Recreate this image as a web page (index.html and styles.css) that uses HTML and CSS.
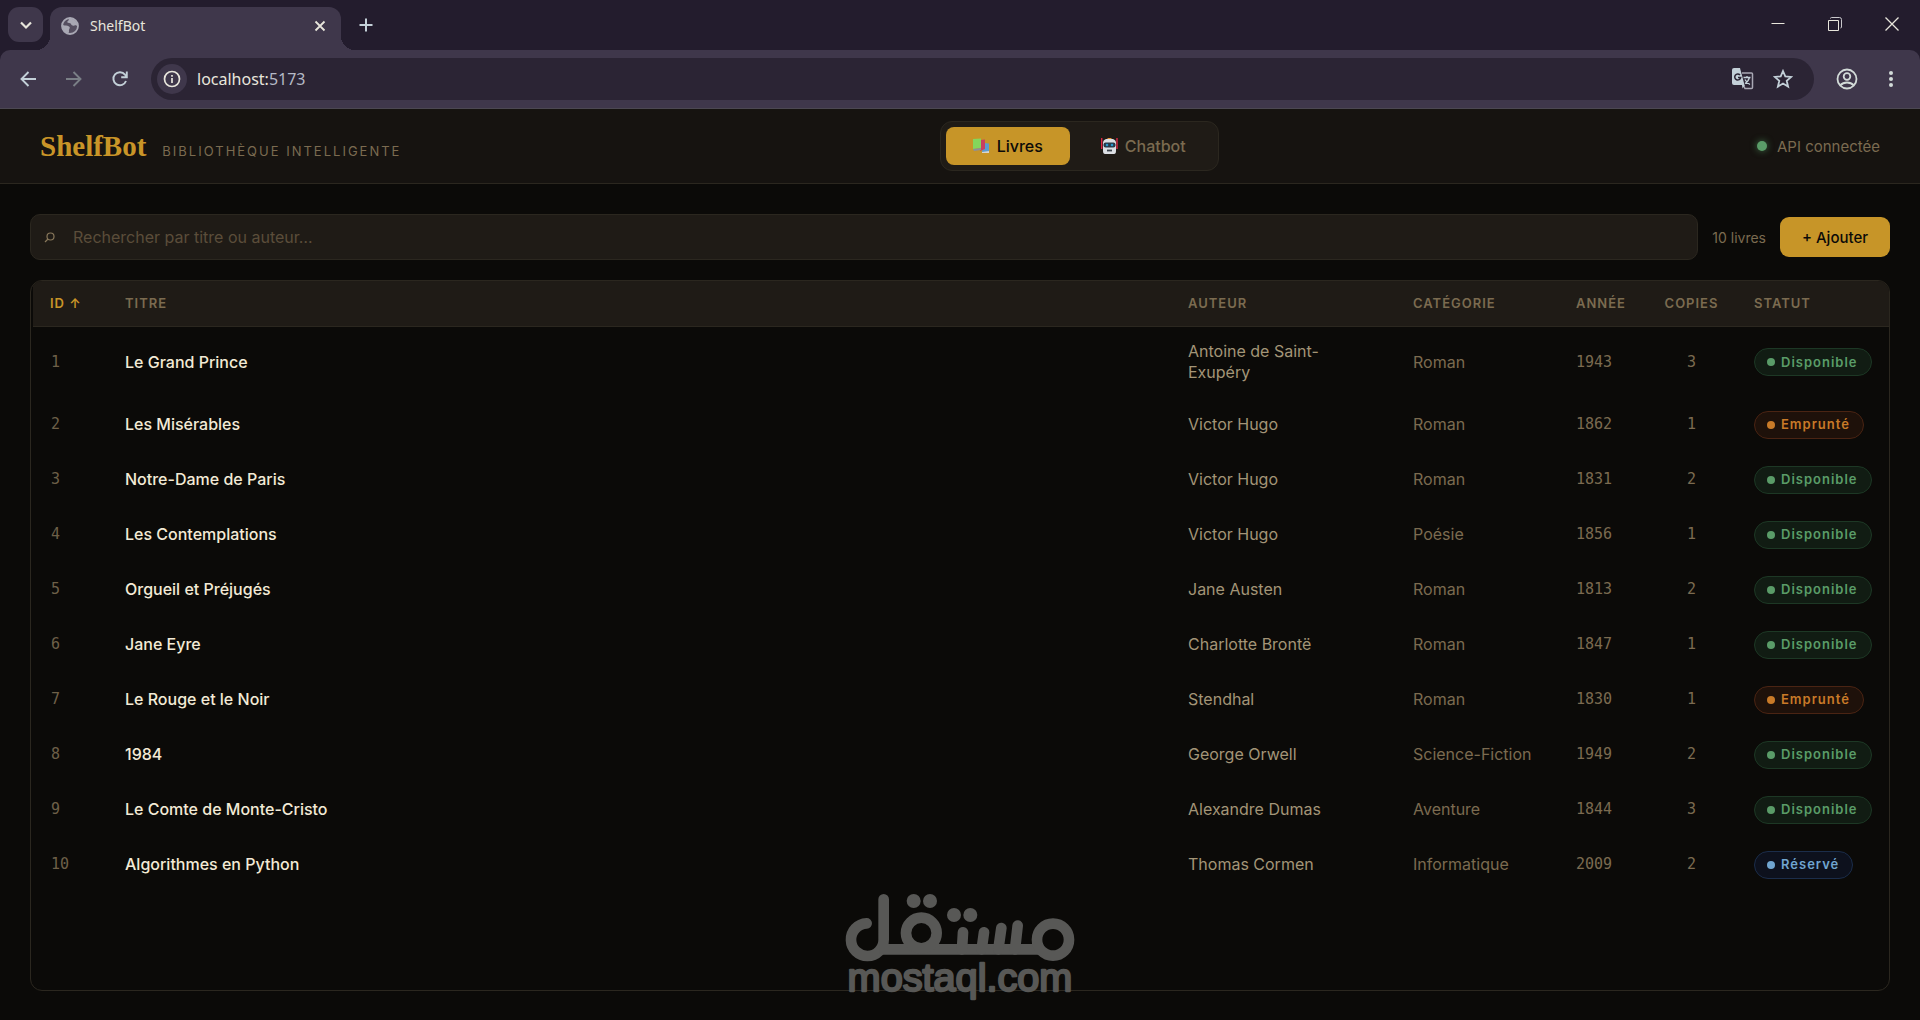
FILE: index.html
```html
<!DOCTYPE html>
<html lang="fr">
<head>
<meta charset="utf-8">
<title>ShelfBot</title>
<link rel="stylesheet" href="styles.css">
</head>
<body>
<div class="browser">
  <div class="tabstrip">
    <button class="tab-search" aria-label="Rechercher des onglets"><svg width="14" height="14" viewBox="0 0 14 14"><path d="M2 4.500l5 5 5-5" fill="none" stroke="#e8e6dc" stroke-width="2.200"/></svg></button>
    <div class="tab">
      <svg width="18" height="18" viewBox="0 0 18 18"><circle cx="9" cy="9" r="8" fill="#554e60" stroke="#a9a8b4" stroke-width="1.800"/><path d="M2 8c2 1 4 0 6 1.500 2 1.500-.5 2.500 0 4.500.3 1.500-1 2.500-1.500 2.500C3 15.500 1 12 2 8z M8 1.500c0 2.500-1.500 2.500-2 3.500 1 1.500 3.500.5 4 2 .5 1.500 2 2 3.500 1.500 1.500-.5 2.500.5 3 1C17 5 13 1 8 1.500z" fill="#a9a8b4"/></svg>
      <span class="tab-title">ShelfBot</span>
      <button class="tab-close" aria-label="Fermer l'onglet"><svg width="12" height="12" viewBox="0 0 12 12"><path d="M1.500 1.500l9 9M10.500 1.500l-9 9" stroke="#e8e6dc" stroke-width="1.800"/></svg></button>
    </div>
    <button class="tab-new" aria-label="Nouvel onglet"><svg width="14" height="14" viewBox="0 0 14 14"><path d="M7 .5v13M.5 7h13" stroke="#c3d0d8" stroke-width="2"/></svg></button>
    <div class="window-controls">
      <button aria-label="Réduire"><svg width="14" height="14" viewBox="0 0 14 14"><path d="M.5 6.500h13" stroke="#e8e6dc"/></svg></button>
      <button aria-label="Restaurer"><svg width="14" height="14" viewBox="0 0 14 14"><path d="M.5 3.500h10v10h-10z" fill="none" stroke="#e8e6dc"/><path d="M2.500 1.500a1 1 0 0 1 1-1h8a2 2 0 0 1 2 2V10a1 1 0 0 1-1 1" fill="none" stroke="#c9c8cc"/></svg></button>
      <button aria-label="Fermer"><svg width="14" height="14" viewBox="0 0 14 14"><path d="M.5 .5l13 13M13.500 .5l-13 13" stroke="#e8e6dc" stroke-width="1.300"/></svg></button>
    </div>
  </div>
  <div class="toolbar">
    <button class="tool" aria-label="Précédent"><svg width="16" height="16" viewBox="0 0 16 16"><path d="M16 8H2M8.500 1L1.500 8l7 7" fill="none" stroke="#c3d0d8" stroke-width="1.900"/></svg></button>
    <button class="tool" aria-label="Suivant"><svg width="16" height="16" viewBox="0 0 16 16"><path d="M0 8h14M7.500 1l7 7-7 7" fill="none" stroke="#7a7f86" stroke-width="1.900"/></svg></button>
    <button class="tool" aria-label="Actualiser"><svg width="16" height="16" viewBox="0 0 16 16"><path d="M14 10a6.500 6.500 0 1 1-1-6.300L14.500 5.500M14.800 .5v5.700H9.200" fill="none" stroke="#c3d0d8" stroke-width="1.900"/></svg></button>
    <div class="address">
      <button class="site-info" aria-label="Informations du site"><svg width="18" height="18" viewBox="0 0 18 18"><circle cx="9" cy="9" r="7.500" fill="none" stroke="#e8e6dc" stroke-width="1.700"/><path d="M9 8v5M9 5v1.700" stroke="#e8e6dc" stroke-width="1.700"/></svg></button>
      <span class="url"><span class="host">localhost:</span>5173</span>
      <button class="tool-small" aria-label="Traduire"><svg width="22" height="22" viewBox="0 0 22 22"><path d="M10 5h9.500a1 1 0 0 1 1 1v13.500a1 1 0 0 1-1 1H13l-2-4" fill="none" stroke="#a9a8b4" stroke-width="1.500"/><path d="M2 0h6l4.500 17H2a2 2 0 0 1-2-2V2a2 2 0 0 1 2-2z" fill="#c3d0d8"/><path d="M10 17h3l-2.500 3.500z" fill="#c3d0d8"/><path d="M8 7a3 3 0 1 0 .7 2.500H6" fill="none" stroke="#2b2434" stroke-width="1.500"/><path d="M11.500 9.500h7M15 8v1.500M17.500 9.500c-1 3-2.500 5-4.500 6M13 11.500c1 2 3 4 5 5" fill="none" stroke="#c3d0d8" stroke-width="1.300"/></svg></button>
      <button class="tool-small" aria-label="Ajouter aux favoris"><svg width="20" height="20" viewBox="0 0 20 20"><path d="M10 2l2.300 5.400 5.900.5-4.500 3.900 1.400 5.800L10 14.500l-5.100 3.100 1.400-5.800L1.800 7.900l5.900-.5z" fill="none" stroke="#c3d0d8" stroke-width="1.800"/></svg></button>
    </div>
    <button class="profile" aria-label="Profil"><svg width="22" height="22" viewBox="0 0 22 22"><g fill="none" stroke="#d2dbd8" stroke-width="1.800"><circle cx="11" cy="11" r="9.500"/><circle cx="11" cy="8.500" r="3.300"/><path d="M4 17.500c4-4 10-4 14 0"/></g></svg></button>
    <button class="menu" aria-label="Menu"><svg width="6" height="18" viewBox="0 0 6 18"><g fill="#d2dbd8"><circle cx="3" cy="3" r="2"/><circle cx="3" cy="9" r="2"/><circle cx="3" cy="15" r="2"/></g></svg></button>
  </div>
</div>

<header class="header">
  <div class="brand">
    <h1 class="logo">ShelfBot</h1>
    <span class="tagline">BIBLIOTHÈQUE INTELLIGENTE</span>
  </div>
  <nav class="nav">
    <button class="nav-item active"><svg width="17" height="16" viewBox="0 0 17 16"><path d="M10 5l6 .5V14l-7 .5z" fill="#5b9bd0"/><path d="M9 14l7-1v2H9z" fill="#d8d4d0"/><path d="M7 2l5-.5V11l-5 2z" fill="#c83f60"/><path d="M0 1l8-.5v9.500L0 11z" fill="#84d65c"/><path d="M0 11l8-1v2l-7 1z" fill="#8d8f98"/></svg>Livres</button>
    <button class="nav-item"><svg width="17" height="16" viewBox="0 0 17 16"><path d="M.7 0v11M16 0v11" stroke="#dc2544" stroke-width="1.400"/><path d="M5 2l2-2h3l2 2z" fill="#e09232"/><path d="M5 1h7q3 1 3 4v8q0 3-2 3H4q-2 0-2-3V5q0-3 3-4z" fill="#dcdfe4"/><rect x="2.500" y="4.500" width="12" height="5" rx="2" fill="#273848"/><circle cx="6" cy="7" r="1.300" fill="#2b95cb"/><circle cx="11" cy="7" r="1.300" fill="#2b95cb"/><path d="M6 12.500h5" stroke="#39414a" stroke-width="1.800"/></svg>Chatbot</button>
  </nav>
  <div class="api"><span class="api-dot"></span>API connectée</div>
</header>

<main class="main">
  <div class="controls">
    <label class="search">
      <svg width="12" height="12" viewBox="0 0 12 12"><circle cx="6.500" cy="5.500" r="3.500" fill="none" stroke="#89785b" stroke-width="1.200"/><path d="M4 8L1 11" stroke="#89785b" stroke-width="1.300"/></svg>
      <input type="text" placeholder="Rechercher par titre ou auteur…" aria-label="Rechercher">
    </label>
    <span class="count">10 livres</span>
    <button class="add">+ Ajouter</button>
  </div>
  <div class="table-wrap">
    <table class="books">
      <colgroup><col class="col-id"><col><col class="col-author"><col class="col-cat"><col class="col-year"><col class="col-copies"><col class="col-status"></colgroup>
      <thead><tr><th class="sorted">ID ↑</th><th>TITRE</th><th>AUTEUR</th><th>CATÉGORIE</th><th>ANNÉE</th><th class="center">COPIES</th><th>STATUT</th></tr></thead>
      <tbody>
        <tr><td class="id">1</td><td class="title">Le Grand Prince</td><td class="author">Antoine de Saint-Exupéry</td><td>Roman</td><td class="num">1943</td><td class="num center">3</td><td class="status"><span class="pill available">Disponible</span></td></tr>
        <tr><td class="id">2</td><td class="title">Les Misérables</td><td class="author">Victor Hugo</td><td>Roman</td><td class="num">1862</td><td class="num center">1</td><td class="status"><span class="pill borrowed">Emprunté</span></td></tr>
        <tr><td class="id">3</td><td class="title">Notre-Dame de Paris</td><td class="author">Victor Hugo</td><td>Roman</td><td class="num">1831</td><td class="num center">2</td><td class="status"><span class="pill available">Disponible</span></td></tr>
        <tr><td class="id">4</td><td class="title">Les Contemplations</td><td class="author">Victor Hugo</td><td>Poésie</td><td class="num">1856</td><td class="num center">1</td><td class="status"><span class="pill available">Disponible</span></td></tr>
        <tr><td class="id">5</td><td class="title">Orgueil et Préjugés</td><td class="author">Jane Austen</td><td>Roman</td><td class="num">1813</td><td class="num center">2</td><td class="status"><span class="pill available">Disponible</span></td></tr>
        <tr><td class="id">6</td><td class="title">Jane Eyre</td><td class="author">Charlotte Brontë</td><td>Roman</td><td class="num">1847</td><td class="num center">1</td><td class="status"><span class="pill available">Disponible</span></td></tr>
        <tr><td class="id">7</td><td class="title">Le Rouge et le Noir</td><td class="author">Stendhal</td><td>Roman</td><td class="num">1830</td><td class="num center">1</td><td class="status"><span class="pill borrowed">Emprunté</span></td></tr>
        <tr><td class="id">8</td><td class="title">1984</td><td class="author">George Orwell</td><td>Science-Fiction</td><td class="num">1949</td><td class="num center">2</td><td class="status"><span class="pill available">Disponible</span></td></tr>
        <tr><td class="id">9</td><td class="title">Le Comte de Monte-Cristo</td><td class="author">Alexandre Dumas</td><td>Aventure</td><td class="num">1844</td><td class="num center">3</td><td class="status"><span class="pill available">Disponible</span></td></tr>
        <tr><td class="id">10</td><td class="title">Algorithmes en Python</td><td class="author">Thomas Cormen</td><td>Informatique</td><td class="num">2009</td><td class="num center">2</td><td class="status"><span class="pill reserved">Réservé</span></td></tr>
      </tbody>
    </table>
  </div>
</main>

<svg class="watermark" width="280" height="150" viewBox="0 0 840 450" role="img" aria-label="مستقل">
  <g fill="none" stroke="#585856" stroke-width="32" stroke-linecap="round" stroke-linejoin="round">
    <path d="M140 160A49 49 0 1 0 191 209V88"/>
    <path d="M178 238H664" stroke-linecap="butt"/>
    <circle cx="304" cy="189" r="46"/>
    <path d="M426 238L429 187M485 238L492 187M535 238L544 174M585 238L593 167"/>
    <circle cx="699" cy="209" r="48"/>
  </g>
  <g fill="#585856"><circle cx="281" cy="93" r="21"/><circle cx="330" cy="93" r="21"/><circle cx="402" cy="135" r="21"/><circle cx="451" cy="135" r="21"/></g>
  <text class="watermark-text" x="420" y="364" text-anchor="middle">mostaql.com</text>
</svg>
</body>
</html>
```
FILE: styles.css
```css
* { box-sizing: border-box; }

body {
  margin: 0;
  min-height: 100vh;
  display: flex;
  flex-direction: column;
  position: relative;
  background: #0b0a08;
  color: #7b6b50;
  font-family: Inter, "Liberation Sans", sans-serif;
  font-size: 15px;
  line-height: 21px;
}

button {
  display: flex;
  align-items: center;
  justify-content: center;
  padding: 0;
  border: 0;
  background: none;
  color: inherit;
  font: inherit;
}

svg { display: block; flex: none; }

/* Browser window */
.browser {
  background: #231c2d;
  font-family: "Noto Sans", "Open Sans", sans-serif;
  border-bottom: 1px solid #4c4852;
}

.tabstrip { display: flex; height: 50px; padding-left: 8px; }

.tab-search {
  width: 35px;
  height: 35px;
  margin: 7px 7px 0 0;
  border-radius: 11px;
  background: #3f374b;
}

.tab {
  position: relative;
  display: flex;
  align-items: center;
  width: 291px;
  height: 43px;
  margin-top: 7px;
  padding: 0 14px 6px 11px;
  border-radius: 12px 12px 0 0;
  background: #3f374b;
}

.tab::before, .tab::after {
  content: "";
  position: absolute;
  bottom: 0;
  width: 14px;
  height: 14px;
}
.tab::before { right: 100%; background: radial-gradient(circle at 0 0, transparent 14px, #3f374b 14px); }
.tab::after { left: 100%; background: radial-gradient(circle at 100% 0, transparent 14px, #3f374b 14px); }

.tab-title { flex: 1; margin-left: 11px; color: #e8e6dc; font-size: 14px; }
.tab-close { width: 14px; height: 20px; }
.tab-new { width: 28px; height: 50px; margin-left: 11px; }
.window-controls { display: flex; height: 48px; margin-left: auto; }
.window-controls button { width: 57px; }

.toolbar {
  display: flex;
  align-items: center;
  gap: 16px;
  height: 58px;
  padding: 0 18px 0 13px;
  border-radius: 10px 10px 0 0;
  background: #3f374b;
}
.tool { width: 30px; height: 30px; }
.profile { width: 34px; height: 34px; }
.menu { width: 22px; height: 34px; }

.address {
  flex: 1;
  display: flex;
  align-items: center;
  height: 42px;
  padding: 0 20px 0 6px;
  border-radius: 21px;
  background: #2b2434;
}
.site-info { width: 30px; height: 30px; border-radius: 50%; background: #3f374b; }
.url { flex: 1; margin-left: 10px; color: #b5b9c6; font-size: 16px; }
.host { color: #e8e6dc; }
.tool-small { width: 22px; height: 30px; margin-left: 18px; }

/* Application header */
.header {
  display: flex;
  align-items: center;
  justify-content: space-between;
  height: 75px;
  padding: 0 40px;
  background: #161310;
  border-bottom: 1px solid #2b271f;
}
.brand { display: flex; align-items: baseline; gap: 16px; }
.logo {
  margin: 0;
  color: #c99528;
  font-family: "Liberation Serif", serif;
  font-size: 29px;
  line-height: 36px;
  font-weight: 700;
}
.tagline { font-size: 13px; letter-spacing: 2px; }

.nav {
  display: flex;
  gap: 4px;
  padding: 5px;
  border: 1px solid #2b271f;
  border-radius: 12px;
  background: #1f1b16;
}
.nav-item {
  gap: 7px;
  height: 38px;
  padding: 0 27px;
  border-radius: 8px;
  font-size: 16px;
  font-weight: 500;
}
.nav-item.active { background: #c79528; color: #0b0a08; }

.api { display: flex; align-items: center; gap: 10px; font-size: 15px; }
.api-dot {
  width: 10px;
  height: 10px;
  border-radius: 50%;
  background: #5a9c68;
  box-shadow: 0 0 7px #3f7049;
}

/* Book list */
.main {
  flex: 1;
  display: flex;
  flex-direction: column;
  gap: 20px;
  padding: 30px 30px 29px;
}
.controls { display: flex; align-items: center; gap: 14px; }
.search {
  flex: 1;
  display: flex;
  align-items: center;
  gap: 17px;
  height: 46px;
  padding: 0 13px;
  border: 1px solid #2b271f;
  border-radius: 10px;
  background: #1f1b16;
}
.search input {
  flex: 1;
  min-width: 0;
  padding: 0;
  border: 0;
  outline: 0;
  background: none;
  color: #f3ead6;
  font: inherit;
  font-size: 16px;
}
.search input::placeholder { color: #5b4d3a; opacity: 1; }
.count { font-size: 14px; }
.add {
  width: 110px;
  height: 40px;
  border-radius: 9px;
  background: #c79528;
  color: #0b0a08;
  font-size: 15px;
  font-weight: 500;
}

.table-wrap {
  flex: 1;
  padding-left: 2px;
  overflow: hidden;
  border: 1px solid #2b271f;
  border-radius: 12px;
}
.books { width: 100%; table-layout: fixed; border-collapse: separate; border-spacing: 0; }
.col-id { width: 75px; }
.col-author { width: 225px; }
.col-cat { width: 163px; }
.col-year { width: 87px; }
.col-copies { width: 91px; }
.col-status { width: 152px; }

.books th {
  height: 46px;
  padding: 0 0 0 17px;
  border-bottom: 1px solid #2b271f;
  background: #1f1b16;
  font-size: 13px;
  font-weight: 600;
  letter-spacing: 1px;
  text-align: left;
  white-space: nowrap;
}
.books th.sorted { color: #c99528; }
.books td { height: 55px; padding: 14px 17px; font-size: 16px; }
.books th.center, .books td.center { padding: 0; text-align: center; }
.books td.title { color: #f3ead6; font-weight: 500; }
.books td.author { padding-right: 40px; color: #a39577; }
.books td.id, .books td.num { font-family: "DejaVu Sans Mono", monospace; font-size: 15px; }
.books td.id { color: #6e6048; padding-left: 18px; }
.books td.status { padding: 13px 0 13px 17px; }

.pill {
  display: flex;
  align-items: center;
  gap: 6px;
  width: fit-content;
  height: 28px;
  padding: 0 13px 0 12px;
  border: 1px solid;
  border-radius: 14px;
  font-size: 13px;
  font-weight: 600;
  letter-spacing: 1px;
}
.pill::before { content: ""; width: 8px; height: 8px; border-radius: 50%; background: currentColor; }
.available { color: #5a9c68; background: #111c13; border-color: #1d3825; }
.borrowed { color: #c87a28; background: #1e110a; border-color: #4a2413; }
.reserved { color: #70a5d0; background: #0d111d; border-color: #1b2d4a; }

.watermark { position: absolute; left: calc(50% - 140px); bottom: 0; pointer-events: none; }
.watermark-text {
  fill: #585856;
  stroke: #585856;
  stroke-width: 7px;
  stroke-linejoin: round;
  font-family: "Liberation Sans", sans-serif;
  font-size: 119px;
}
```
